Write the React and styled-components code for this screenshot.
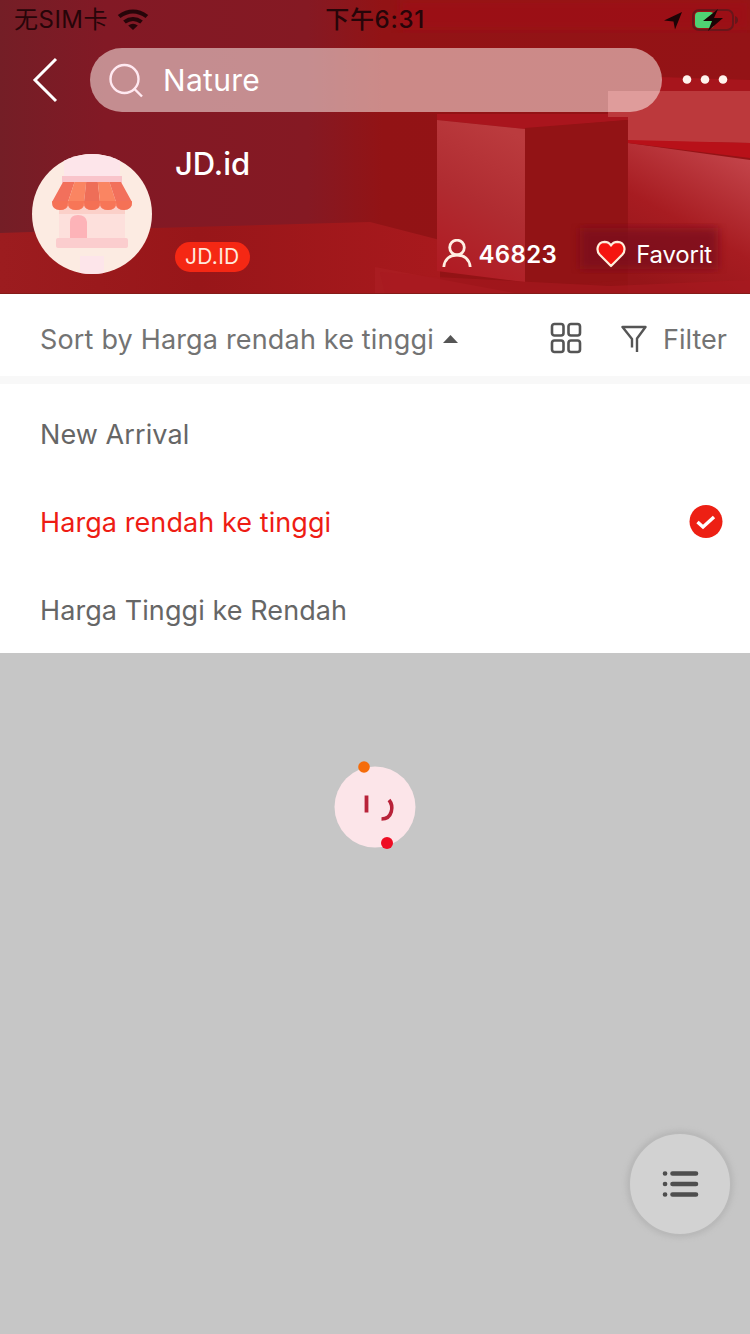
import React from 'react';
import styled, { createGlobalStyle } from 'styled-components';

const GlobalStyle = createGlobalStyle`
  * { box-sizing: border-box; }
  body {
    margin: 0;
    background: #c6c6c6;
    font-family: Inter, "Noto Sans CJK SC", sans-serif;
  }
`;

const Screen = styled.div`
  display: flex;
  flex-direction: column;
  width: 750px;
  height: 1334px;
  background: #c6c6c6;
  overflow: hidden;
`;

const Header = styled.header`
  position: relative;
  isolation: isolate;
  display: flex;
  flex-direction: column;
  height: 294px;
  flex: none;
  color: #fff;
`;

const Backdrop = styled.svg`
  position: absolute;
  inset: 0;
  z-index: -1;
`;

const StatusBar = styled.div`
  display: grid;
  grid-template-columns: 1fr auto 1fr;
  align-items: center;
  height: 40px;
  padding: 0 11px 0 14px;
  color: #260509;
  font-size: 23px;
  line-height: 40px;
`;

const StatusGroup = styled.div`
  display: flex;
  align-items: center;
  justify-content: ${(p) => (p.$end ? 'flex-end' : 'flex-start')};
  gap: ${(p) => p.$gap}px;
`;

const Carrier = styled.span`
  font-size: 24px;
  letter-spacing: 0.5px;
`;

const Clock = styled.span`
  font-size: 24px;
  font-weight: 500;
  letter-spacing: 0.7px;
  margin-right: 3px;
`;

const NavBar = styled.div`
  display: flex;
  align-items: center;
  height: 80px;
  padding: 0 22px 0 32px;
`;

const SearchBox = styled.div`
  display: flex;
  align-items: center;
  gap: 19px;
  width: 572px;
  flex: none;
  height: 64px;
  margin: 0 20px 0 32px;
  padding-left: 19px;
  border-radius: 32px;
  background: rgba(255, 245, 240, 0.53);
  font-size: 30px;
  letter-spacing: 0.3px;
`;

const ShopRow = styled.div`
  display: flex;
  padding: 34px 38px 0 32px;
`;

const Avatar = styled.div`
  display: flex;
  width: 120px;
  height: 120px;
  border-radius: 50%;
  background: #fcebe2;
  overflow: hidden;
`;

const ShopInfo = styled.div`
  display: flex;
  flex: 1;
  flex-direction: column;
  justify-content: space-between;
  align-items: flex-start;
  height: 120px;
  padding: 0 0 2px 23px;
`;

const ShopName = styled.h1`
  margin: -10px 0 0;
  font-size: 31px;
  font-weight: 500;
  line-height: 40px;
  letter-spacing: 0;
`;

const Tag = styled.span`
  padding: 0 10px;
  border-radius: 15px;
  background: #f52814;
  color: #ffe9dc;
  font-size: 21px;
  line-height: 30px;
  letter-spacing: 0.3px;
`;

const ShopStats = styled.div`
  display: flex;
  align-items: flex-end;
  padding-bottom: 5px;
  gap: 39px;
`;

const Stat = styled.div`
  display: flex;
  align-items: center;
  gap: ${(p) => p.$gap}px;
  height: 30px;
  font-size: 24px;
  font-weight: ${(p) => (p.$strong ? 600 : 400)};
  letter-spacing: ${(p) => (p.$strong ? 0.35 : -0.2)}px;
`;

const SortBar = styled.div`
  display: flex;
  align-items: center;
  height: 90px;
  flex: none;
  padding: 0 23px 0 40px;
  background: #fff;
  border-bottom: 8px solid #f8f8f8;
  color: #737373;
  font-size: 27px;
  font-weight: 400;
`;

const SortLabel = styled.div`
  display: flex;
  align-items: center;
  flex: 1;
  gap: 9px;
  padding-top: 8px;
  letter-spacing: 0.17px;
`;

const BarAction = styled.div`
  display: flex;
  align-items: center;
  gap: 16px;
  margin-left: 39px;
  padding-top: ${(p) => p.$top || 8}px;
`;

const OptionList = styled.ul`
  margin: 0;
  padding: 6px 0;
  height: 269px;
  flex: none;
  list-style: none;
  background: #fff;
`;

const Option = styled.li`
  display: flex;
  align-items: center;
  justify-content: space-between;
  height: 88px;
  padding: 0 27px 0 40px;
  color: ${(p) => (p.$selected ? '#ee1c14' : '#666')};
  font-size: 27px;
  font-weight: 400;
  letter-spacing: 0.08px;
`;

const Content = styled.main`
  display: flex;
  flex: 1;
  flex-direction: column;
  align-items: center;
  justify-content: space-between;
  padding: 103px 0 98px;
`;

const FloatingButton = styled.button`
  display: flex;
  align-items: center;
  justify-content: center;
  align-self: flex-end;
  width: 104px;
  height: 104px;
  margin-right: 18px;
  padding: 0;
  border: 2px solid #bababa;
  border-radius: 50%;
  background: #d2d2d2;
  box-shadow: 0 0 5px 2px #b9b9b9;
`;

function HeaderBackdrop() {
  return (
    <Backdrop width="750" height="294" viewBox="0 0 750 294">
      <defs>
        <linearGradient id="wall" x1="0" x2="1" y1="0" y2="0">
          <stop offset="0" stopColor="#741e26" />
          <stop offset=".14" stopColor="#821925" />
          <stop offset=".41" stopColor="#851923" />
          <stop offset=".51" stopColor="#921315" />
          <stop offset="1" stopColor="#941316" />
        </linearGradient>
        <linearGradient id="floor" x1="0" x2="1" y1="0" y2="0">
          <stop offset="0" stopColor="#9c1c1f" />
          <stop offset=".45" stopColor="#981619" />
          <stop offset="1" stopColor="#a8191d" />
        </linearGradient>
        <linearGradient id="cube" x1=".6" x2=".3" y1="0" y2="1">
          <stop offset="0" stopColor="#bb3b3e" />
          <stop offset=".5" stopColor="#b02c31" />
          <stop offset="1" stopColor="#b01b23" />
        </linearGradient>
        <linearGradient id="slope" x1=".75" x2=".3" y1="0" y2="1">
          <stop offset="0" stopColor="#c3444a" />
          <stop offset=".55" stopColor="#a71c21" />
          <stop offset="1" stopColor="#961519" />
        </linearGradient>
        <filter id="soft"><feGaussianBlur stdDeviation="5" /></filter>
      </defs>
      <rect width="750" height="294" fill="url(#wall)" />
      <path d="M400 0H750V30H400Z" fill="#a30c14" opacity=".55" filter="url(#soft)" />
      <path d="M0 233L155 228 370 222 440 240V294H0Z" fill="url(#floor)" />
      <path d="M437 114H628V120L525 129 437 120Z" fill="#a9151d" />
      <path d="M608 91H750V143L628 141V117H608Z" fill="#bc393c" />
      <path d="M660 77L750 80V91H660Z" fill="#a7151c" />
      <path d="M437 120L525 129V282L437 271Z" fill="url(#cube)" />
      <path d="M525 128L627 120V280L525 288Z" fill="#921315" />
      <path d="M628 143L750 160V294H628Z" fill="url(#slope)" />
      <path d="M628 140L750 143V158L628 143Z" fill="#b81119" />
      <path d="M375 267L520 294H375Z" fill="#ae2024" opacity=".6" />
      <path d="M437 277L610 286 750 280V294H385L380 272Z" fill="#a9191f" opacity=".6" />
      <rect x="580" y="228" width="138" height="41" fill="#79101d" opacity=".75" filter="url(#soft)" />
      <path d="M0 293H750V294H0Z" fill="#851b18" />
    </Backdrop>
  );
}

function WifiIcon() {
  return (
    <svg width="32" height="22" viewBox="0 0 30 22" preserveAspectRatio="none" fill="none" stroke="#260509" strokeWidth="4">
      <path d="M2 7.5Q15-2.5 28 7.5" />
      <path d="M7 13Q15 7 23 13" />
      <path d="M10.5 16.5Q15 13 19.5 16.5L15 21Z" fill="#260509" stroke="none" />
    </svg>
  );
}

function LocationIcon() {
  return (
    <svg width="19" height="19" viewBox="0 0 19 19" fill="#1c0406">
      <path d="M0 9.500L18 1 11 18.500 9.500 10.500Z" />
    </svg>
  );
}

function BatteryIcon() {
  return (
    <svg width="47" height="24" viewBox="0 0 47 24">
      <rect x="1" y="2" width="40" height="20" rx="6" fill="none" stroke="#68161a" strokeWidth="2" />
      <path d="M43 8Q46 9 46 12T43 16Z" fill="#68161a" />
      <rect x="3" y="4" width="19" height="16" rx="4" fill="#4fd273" />
      <path d="M26 1L11 13H20L16 23 31 10H22Z" fill="#190405" />
    </svg>
  );
}

function BackIcon() {
  return (
    <svg width="26" height="46" viewBox="0 0 26 46" fill="none" stroke="#fff" strokeWidth="3">
      <path d="M24 2L3 23 24 44" />
    </svg>
  );
}

function SearchIcon() {
  return (
    <svg width="35" height="35" viewBox="0 0 35 35" fill="none" stroke="#ffe9f1" strokeWidth="2.400">
      <circle cx="15.500" cy="16" r="14" />
      <path d="M25.500 26L33 33.500" />
    </svg>
  );
}

function MoreIcon() {
  return (
    <svg width="46" height="12" viewBox="0 0 46 12" fill="#fff3ed">
      <circle cx="5" cy="5.500" r="4.300" />
      <circle cx="23" cy="5.500" r="4.300" />
      <circle cx="41" cy="5.500" r="4.300" />
    </svg>
  );
}

function StoreIcon() {
  const stripes = ['#f2705c', '#fa8562', '#ee6e58', '#fa8562', '#f2705c'];
  return (
    <svg width="120" height="120" viewBox="0 0 120 120">
      <path d="M32 0H88V22H32ZM48 102H72V120H48Z" fill="#fde5ea" />
      <rect x="30" y="22" width="60" height="7" fill="#f9c4cb" />
      <rect x="27" y="53" width="66" height="34" fill="#fde0dc" />
      <rect x="27" y="53" width="66" height="7" fill="#fbd0c9" />
      <path d="M38 68Q38 61 46 61T55 68V86H38Z" fill="#fdb3b8" />
      <rect x="24" y="84" width="72" height="10" rx="2" fill="#fbcdce" />
      {stripes.map((fill, i) => (
        <path
          key={i}
          d={`M${31 + i * 11.6} 28H${42.6 + i * 11.6}L${36 + i * 16} 48Q${36 + i * 16} 56 ${28 + i * 16} 56T${20 + i * 16} 48Z`}
          fill={fill}
        />
      ))}
      <path d="M20 47H100Q101 55 92 56 86 56 84 52 82 56 76 56 70 56 68 52 66 56 60 56 54 56 52 52 50 56 44 56 38 56 36 52 34 56 28 56 20 55 20 47Z" fill="#f67254" opacity=".75" />
    </svg>
  );
}

function PersonIcon() {
  return (
    <svg width="30" height="30" viewBox="0 0 30 30" fill="none" stroke="#ffefe3" strokeWidth="2.800">
      <circle cx="15" cy="8.500" r="7.300" />
      <path d="M1.800 28C2.500 20 8 16 15 16S27.500 20 28.200 28" />
    </svg>
  );
}

function HeartIcon() {
  return (
    <svg width="30" height="28" viewBox="0 0 30 28" fill="#f5150f" stroke="#ffefdc" strokeWidth="2.200" strokeLinejoin="round">
      <path d="M15 26L3.800 14.800C-.5 10 1.500 2 8.500 1.800 11.500 1.800 13.800 3.300 15 5.500 16.200 3.300 18.500 1.800 21.500 1.800 28.500 2 30.500 10 26.200 14.800Z" />
    </svg>
  );
}

function GridIcon() {
  return (
    <svg width="32" height="32" viewBox="0 0 32 32" fill="none" stroke="#555" strokeWidth="2.600">
      <rect x="2" y="2" width="11.500" height="11.500" rx="2.500" />
      <rect x="18.500" y="2" width="11.500" height="11.500" rx="2.500" />
      <rect x="2" y="18.500" width="11.500" height="11.500" rx="2.500" />
      <rect x="18.500" y="18.500" width="11.500" height="11.500" rx="2.500" />
    </svg>
  );
}

function FunnelIcon() {
  return (
    <svg width="26" height="28" viewBox="0 0 26 28" fill="none" stroke="#555" strokeWidth="2.400" strokeLinejoin="round">
      <path d="M11 22.500V14L1.500 2H24.500L16 13.500V27" />
    </svg>
  );
}

function CheckBadge() {
  return (
    <svg width="34" height="34" viewBox="0 0 34 34">
      <circle cx="17" cy="16.500" r="16.500" fill="#ed2014" />
      <path d="M8.500 17L14 22 25 12" fill="none" stroke="#fff" strokeWidth="3.400" />
    </svg>
  );
}

function Loader() {
  return (
    <svg width="86" height="96" viewBox="0 0 86 96">
      <circle cx="43" cy="51" r="40.500" fill="#fce5e9" />
      <circle cx="32" cy="11" r="5.800" fill="#f56c0a" />
      <circle cx="55" cy="87" r="6" fill="#ee0c23" />
      <path d="M34.500 39.500V56.500" stroke="#b82239" strokeWidth="3.800" />
      <path d="M57 44C62 50 60.500 63 49.500 63" fill="none" stroke="#b82239" strokeWidth="3.600" />
    </svg>
  );
}

function ListIcon() {
  return (
    <svg width="38" height="28" viewBox="0 0 38 28" fill="none" stroke="#4e4e4e" strokeWidth="4.600" strokeLinecap="round">
      {[3.5, 14, 24.5].map((y) => (
        <path key={y} d={`M4 ${y}H4.100M11.500 ${y}H35`} />
      ))}
    </svg>
  );
}

export default function App() {
  return (
    <Screen>
      <GlobalStyle />
      <Header>
        <HeaderBackdrop />
        <StatusBar>
          <StatusGroup $gap={9}>
            <Carrier>无SIM卡</Carrier>
            <WifiIcon />
          </StatusGroup>
          <Clock>下午6:31</Clock>
          <StatusGroup $end $gap={9}>
            <LocationIcon />
            <BatteryIcon />
          </StatusGroup>
        </StatusBar>
        <NavBar>
          <BackIcon />
          <SearchBox>
            <SearchIcon />
            <span>Nature</span>
          </SearchBox>
          <MoreIcon />
        </NavBar>
        <ShopRow>
          <Avatar><StoreIcon /></Avatar>
          <ShopInfo>
            <ShopName>JD.id</ShopName>
            <Tag>JD.ID</Tag>
          </ShopInfo>
          <ShopStats>
            <Stat $gap={7} $strong><PersonIcon /><span>46823</span></Stat>
            <Stat $gap={10}><HeartIcon /><span>Favorit</span></Stat>
          </ShopStats>
        </ShopRow>
      </Header>
      <SortBar>
        <SortLabel>
          <span>Sort by Harga rendah ke tinggi</span>
          <svg width="15" height="8" viewBox="0 0 15 8"><path d="M0 8L7.500 0 15 8Z" fill="#555" /></svg>
        </SortLabel>
        <BarAction $top={6}><GridIcon /></BarAction>
        <BarAction><FunnelIcon /><span>Filter</span></BarAction>
      </SortBar>
      <OptionList>
        <Option>New Arrival</Option>
        <Option $selected><span>Harga rendah ke tinggi</span><CheckBadge /></Option>
        <Option>Harga Tinggi ke Rendah</Option>
      </OptionList>
      <Content>
        <Loader />
        <FloatingButton aria-label="Menu"><ListIcon /></FloatingButton>
      </Content>
    </Screen>
  );
}
